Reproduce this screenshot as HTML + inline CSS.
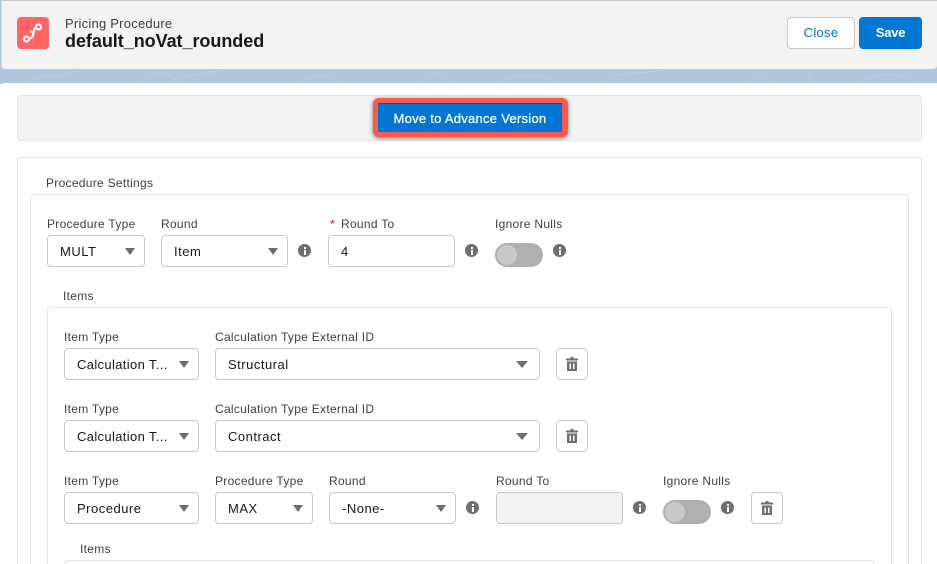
<!DOCTYPE html>
<html style="overflow:hidden;width:937px;height:564px"><head><meta charset="utf-8"><style>
html,body{margin:0;padding:0}
body{width:937px;height:564px;overflow:hidden;position:relative;background:#fff;font-family:"Liberation Sans",sans-serif;color:#3e3e3c}
div,span,svg{position:absolute;box-sizing:border-box}
#w{left:0;top:0;width:937px;height:564px;overflow:hidden}
.l{font-size:12px;letter-spacing:.29px;line-height:16px;white-space:nowrap;color:#3e3e3c}
.f{height:32px;background:#fff;border:1px solid #c9c9c9;border-radius:4px;font-size:13px;letter-spacing:.5px;line-height:31px;padding-left:12px;color:#181818;white-space:nowrap}
.f:after{content:"";position:absolute;right:9px;top:12px;border-left:5.5px solid transparent;border-right:5.500px solid transparent;border-top:7px solid #706e6b}
.wide:after{right:11px;border-left-width:6px;border-right-width:6px}
.n:after{display:none}
.box{border:1px solid #e5e5e5;border-bottom:0;border-radius:4px 4px 0 0;background:#fff}
.i{width:13px;height:13px;border-radius:50%;background:#706e6b;color:#fff}
.i:before{content:"";position:absolute;left:5.5px;top:2.5px;width:2px;height:2px;background:#fff}
.i:after{content:"";position:absolute;left:5.5px;top:5.5px;width:2px;height:5px;background:#fff}
.t{width:48px;height:24px;border-radius:12px;background:#b0b0b0}
.t:after{content:"";position:absolute;left:2px;top:2px;width:20px;height:20px;border-radius:50%;background:#c9c9c9}
.d{width:32px;height:32px;background:#fff;border:1px solid #c9c9c9;border-radius:4px}
</style></head><body><div id="w">
<div style="left:0;top:0;width:937px;height:84px;background:#afc7de"></div>
<svg style="left:0;top:68px" width="937" height="16" fill="none" stroke="#c3d5e6" stroke-width=".5"><path d="M20 16C40 4 60 12 80 2M140 16c10-14 30-14 40 0M170 14c20-12 30-4 50-12M300 16c10-10 30-12 46 0M420 16c6-14 30-14 36 0M500 14c16-10 40-8 60 0M600 16c20-16 40-8 60-14M745 16c10-14 20-14 30 0M800 16V4M810 16V4M860 16c10-12 40-12 60-2"/></svg>
<div style="left:1px;top:0;width:936px;height:70px;background:#f3f3f3;border-radius:0 0 4px 4px;border-bottom:1px solid #c4c4c4;border-top:1px solid #c9c9c9;border-left:1px solid #d8d8d8"></div>
<div style="left:17px;top:17px;width:32px;height:32px;border-radius:4px;background:#ff6767"></div>
<svg style="left:17px;top:17px" width="32" height="32" fill="none" stroke="#fff" stroke-width="2"><circle cx="9.500" cy="22" r="2.500"/><circle cx="21.500" cy="10" r="2.500"/><path d="M12 21.500c2.500 0 3.500-1 4-3l1-5c.3-1.500 1-3 2-3.500M13 14.500l5 1"/></svg>
<div style="left:65px;top:15px;font-size:13px;letter-spacing:.24px;line-height:18px;white-space:nowrap;color:#3e3e3c">Pricing Procedure</div>
<div style="left:65px;top:30px;font-size:18px;font-weight:bold;line-height:22px;letter-spacing:-.04px;white-space:nowrap;color:#181818">default_noVat_rounded</div>
<div style="left:787px;top:17px;width:68px;height:32px;background:#fff;border:1px solid #c9c9c9;border-radius:4px;text-align:center;font-size:13px;letter-spacing:.3px;line-height:30px;color:#0b6cc4">Close</div>
<div style="left:859px;top:17px;width:63px;height:32px;background:#0176d3;border-radius:4px;text-align:center;font-size:13px;font-weight:bold;letter-spacing:-.2px;line-height:32px;color:#fff">Save</div>

<div style="left:1px;top:83px;width:936px;height:481px;background:#fff;border-radius:4px 0 0 0"></div>
<div style="left:17px;top:95px;width:905px;height:46px;background:#f3f3f3;border:1px solid #e5e5e5;border-radius:4px"></div>
<div style="left:373px;top:98px;width:195px;height:39px;background:#fe5a4e;border-radius:6px;box-shadow:0 1px 4px rgba(0,0,0,.55)"></div>
<div style="left:378px;top:103px;width:184px;height:29px;background:#0176d3;box-shadow:inset 0 1px 1px rgba(0,0,0,.35);text-align:center;font-size:13px;line-height:31px;color:#fff;letter-spacing:.27px;-webkit-text-stroke:.3px #fff;white-space:nowrap">Move to Advance Version</div>

<div class="box" style="left:17px;top:157px;width:905px;height:407px"></div>
<div class="l" style="left:46px;top:175px">Procedure Settings</div>
<div class="box" style="left:30px;top:194px;width:879px;height:370px"></div>

<div class="l" style="left:47px;top:216px">Procedure Type</div>
<div class="f" style="left:47px;top:235px;width:98px">MULT</div>
<div class="l" style="left:161px;top:216px">Round</div>
<div class="f" style="left:161px;top:235px;width:127px">Item</div>
<div class="i" style="left:298px;top:244px"></div>
<div class="l" style="left:330px;top:216px;color:#ea001e">*</div>
<div class="l" style="left:341px;top:216px">Round To</div>
<div class="f n" style="left:328px;top:235px;width:127px">4</div>
<div class="i" style="left:465px;top:244px"></div>
<div class="l" style="left:495px;top:216px">Ignore Nulls</div>
<div class="t" style="left:495px;top:243px"></div>
<div class="i" style="left:553px;top:244px"></div>

<div class="l" style="left:63px;top:288px">Items</div>
<div class="box" style="left:47px;top:307px;width:845px;height:257px"></div>

<div class="l" style="left:64px;top:329px">Item Type</div>
<div class="f" style="left:64px;top:348px;width:135px;letter-spacing:.35px">Calculation T...</div>
<div class="l" style="left:215px;top:329px">Calculation Type External ID</div>
<div class="f wide" style="left:215px;top:348px;width:325px">Structural</div>
<div class="d" style="left:556px;top:348px"><svg style="left:9px;top:8px" width="12" height="14" fill="#706e6b"><path d="M4.500 0h3v1.500H12v2H0v-2h4.500zM1 4.500h10V14H1zM3.500 6.500V12H5V6.500zM7 6.500V12h1.500V6.500z"/></svg></div>

<div class="l" style="left:64px;top:401px">Item Type</div>
<div class="f" style="left:64px;top:420px;width:135px;letter-spacing:.35px">Calculation T...</div>
<div class="l" style="left:215px;top:401px">Calculation Type External ID</div>
<div class="f wide" style="left:215px;top:420px;width:325px">Contract</div>
<div class="d" style="left:556px;top:420px"><svg style="left:9px;top:8px" width="12" height="14" fill="#706e6b"><path d="M4.500 0h3v1.500H12v2H0v-2h4.500zM1 4.500h10V14H1zM3.500 6.500V12H5V6.500zM7 6.500V12h1.500V6.500z"/></svg></div>

<div class="l" style="left:64px;top:473px">Item Type</div>
<div class="f" style="left:64px;top:492px;width:135px">Procedure</div>
<div class="l" style="left:215px;top:473px">Procedure Type</div>
<div class="f" style="left:215px;top:492px;width:98px">MAX</div>
<div class="l" style="left:329px;top:473px">Round</div>
<div class="f" style="left:329px;top:492px;width:127px">-None-</div>
<div class="i" style="left:466px;top:501px"></div>
<div class="l" style="left:496px;top:473px">Round To</div>
<div class="f n" style="left:496px;top:492px;width:127px;background:#f3f3f3"></div>
<div class="i" style="left:633px;top:501px"></div>
<div class="l" style="left:663px;top:473px">Ignore Nulls</div>
<div class="t" style="left:663px;top:500px"></div>
<div class="i" style="left:721px;top:501px"></div>
<div class="d" style="left:751px;top:492px"><svg style="left:9px;top:8px" width="12" height="14" fill="#706e6b"><path d="M4.500 0h3v1.500H12v2H0v-2h4.500zM1 4.500h10V14H1zM3.500 6.500V12H5V6.500zM7 6.500V12h1.500V6.500z"/></svg></div>

<div class="l" style="left:80px;top:541px">Items</div>
<div class="box" style="left:64px;top:560px;width:811px;height:4px"></div>
</div></body></html>
